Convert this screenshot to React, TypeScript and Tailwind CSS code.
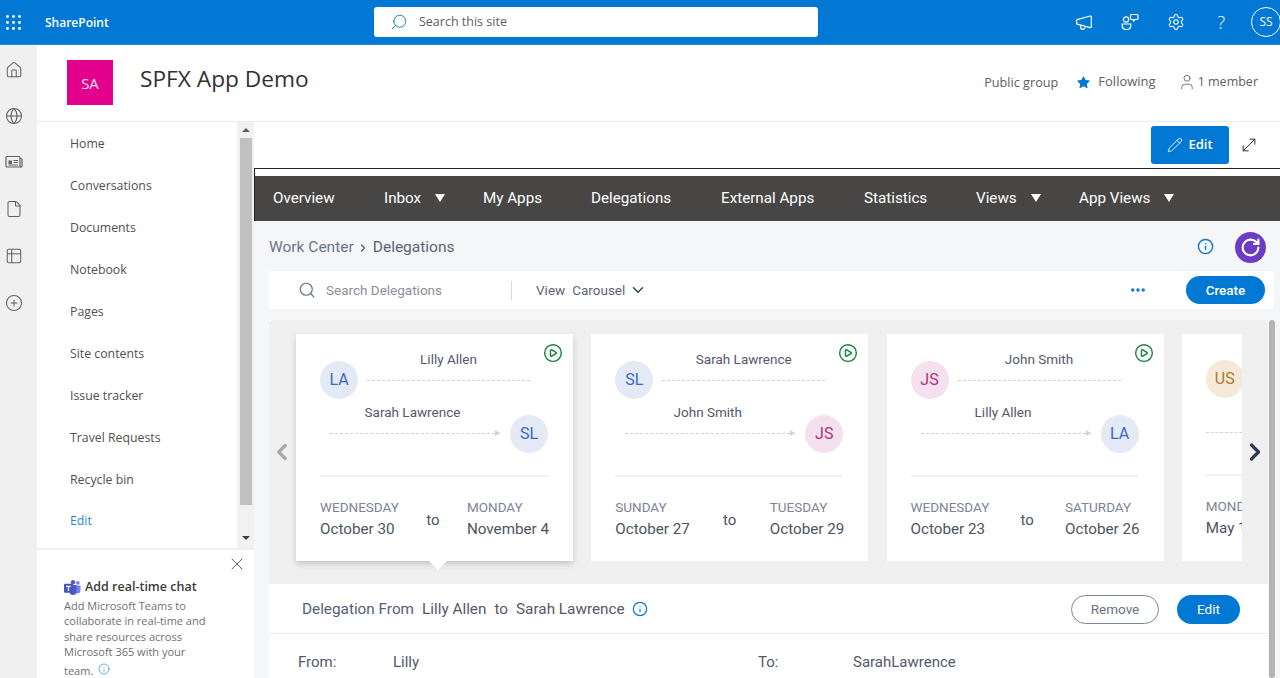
import { ChevronDown, ChevronLeft, ChevronRight, CirclePlay, CirclePlus, Ellipsis, File, Globe, House, Info, MoveDiagonal, Pencil, RotateCw, Search, Settings, Star, Table2, User, X } from 'lucide-react';

const SEGOE = "font-['Open_Sans',sans-serif]";

const NAV_LINKS = ['Home', 'Conversations', 'Documents', 'Notebook', 'Pages', 'Site contents', 'Issue tracker', 'Travel Requests', 'Recycle bin'];

const MENU = [
  { label: 'Overview', width: 'w-[111px]' },
  { label: 'Inbox', width: 'w-[99px]', caret: true },
  { label: 'My Apps', width: 'w-[108px]' },
  { label: 'Delegations', width: 'w-[130px]' },
  { label: 'External Apps', width: 'w-[143px]' },
  { label: 'Statistics', width: 'w-[112px]' },
  { label: 'Views', width: 'w-[103px]', caret: true },
  { label: 'App Views', width: 'w-[120px]', caret: true },
];

type Person = { name: string; initials: string; tone: string };

const LA: Person = { name: 'Lilly Allen', initials: 'LA', tone: 'bg-[#e3eaf6] text-[#3b66c4]' };
const SL: Person = { name: 'Sarah Lawrence', initials: 'SL', tone: 'bg-[#e3eaf6] text-[#3b66c4]' };
const JS: Person = { name: 'John Smith', initials: 'JS', tone: 'bg-[#f5e1ee] text-[#b0307e]' };

const CARDS = [
  { from: LA, to: SL, startDay: 'WEDNESDAY', start: 'October 30', endDay: 'MONDAY', end: 'November 4', selected: true },
  { from: SL, to: JS, startDay: 'SUNDAY', start: 'October 27', endDay: 'TUESDAY', end: 'October 29' },
  { from: JS, to: LA, startDay: 'WEDNESDAY', start: 'October 23', endDay: 'SATURDAY', end: 'October 26' },
];

function Waffle() {
  return (
    <svg width="15" height="15" viewBox="0 0 15 15" fill="white" aria-hidden>
      {[1.5, 7.5, 13.5].map((y) =>
        [1.5, 7.5, 13.5].map((x) => <circle key={`${x}-${y}`} cx={x} cy={y} r="1.4" />),
      )}
    </svg>
  );
}

function Horn() {
  return (
    <svg width="16" height="15" viewBox="0 0 16 15" fill="none" stroke="white" strokeWidth="1.2" aria-hidden>
      <path d="M1.2 4.6 14 1a1 1 0 0 1 1.3 1v9.6a1 1 0 0 1-1.3 1L1.2 9.2a.8.8 0 0 1-.6-.8V5.4a.8.8 0 0 1 .6-.8z" />
      <path d="M4.6 10.2v1.6a2.3 2.3 0 0 0 4.6.4" />
    </svg>
  );
}

function ChatBubbles() {
  return (
    <svg width="18" height="18" viewBox="0 0 18 18" fill="none" stroke="white" strokeWidth="1.2" aria-hidden>
      <path d="M10.5 1.5h5.5a1 1 0 0 1 1 1v3a1 1 0 0 1-1 1h-2l-1.5 1.5V6.5h-2a1 1 0 0 1-1-1v-3a1 1 0 0 1 1-1z" />
      <circle cx="5" cy="6.5" r="2.6" />
      <path d="M1.2 11h8.6v1.5c0 2.5-2 4-4.3 4s-4.3-1.5-4.3-4z" />
    </svg>
  );
}

function NewsIcon() {
  return (
    <svg width="18" height="18" viewBox="0 0 18 18" fill="none" stroke="currentColor" strokeWidth="1.2" className="mt-[28px]" aria-hidden>
      <path d="M1 4.5a1 1 0 0 1 1-1h12a1 1 0 0 1 1 1v9.5H2a1 1 0 0 1-1-1z" />
      <path d="M15 5.5h1a1 1 0 0 1 1 1V13a1 1 0 0 1-1 1h-1" />
      <rect x="3.5" y="7.5" width="3.5" height="3.5" fill="currentColor" stroke="none" />
      <path d="M8.5 7.5h4.5M8.5 9.5h4.5M3.5 12h9.5" strokeWidth="1" />
    </svg>
  );
}

function TeamsLogo() {
  return (
    <svg width="17" height="15" viewBox="0 0 17 15" aria-hidden>
      <circle cx="13.8" cy="2.8" r="1.9" fill="#7b83eb" />
      <path d="M10.5 5.5h6v5a3 3 0 0 1-6 0z" fill="#7b83eb" />
      <circle cx="9" cy="2.2" r="2.2" fill="#5059c9" />
      <path d="M5.5 5h7v6.5a3.5 3.5 0 0 1-7 0z" fill="#5059c9" />
      <rect x="0" y="3.8" width="9" height="9" rx="1" fill="#4b53bc" />
      <path d="M2 5.8h5v1.2H5.1v4H3.9V7H2z" fill="white" />
    </svg>
  );
}

function LeftRail() {
  return (
    <div className="flex w-[37px] shrink-0 flex-col items-start bg-[#f0f0f0] pl-[5px] pt-[16px] text-[#616161]">
      <House size={18} strokeWidth={1.4} />
      <Globe size={18} strokeWidth={1.4} className="mt-[28px]" />
      <NewsIcon />
      <File size={18} strokeWidth={1.4} className="mt-[29px]" />
      <Table2 size={18} strokeWidth={1.4} className="mt-[29px]" />
      <CirclePlus size={18} strokeWidth={1.4} className="mt-[29px]" />
    </div>
  );
}

function SideNav() {
  return (
    <aside className={`flex w-[217px] shrink-0 flex-col ${SEGOE}`}>
      <div className="flex h-[426px] shrink-0">
        <nav className="flex flex-1 flex-col pl-[33px] pt-[1px] text-[12.3px] text-[#505050]">
          {NAV_LINKS.map((link) => (
            <a key={link} className="flex h-[42px] shrink-0 items-center">
              {link}
            </a>
          ))}
          <a className="flex h-[41px] shrink-0 items-center text-[#2b88d8]">Edit</a>
        </nav>
        <div className="flex w-[17px] flex-col items-center bg-[#f1f1f1]">
          <div className="mt-[6px] h-0 w-0 border-x-[4px] border-b-[4px] border-x-transparent border-b-[#606060]" />
          <div className="mt-[6px] h-[367px] w-[12px] bg-[#c1c1c1]" />
          <div className="mt-[31px] h-0 w-0 border-x-[4px] border-t-[4px] border-x-transparent border-t-[#404040]" />
        </div>
      </div>
      <div className="relative flex-1 border-t-2 border-[#f0f0f0] pl-[27px] pr-[47px] pt-[28px]">
        <X size={20} strokeWidth={1.1} className="absolute right-[7px] top-[4px] text-[#505050]" />
        <div className="flex items-center gap-[4px] text-[12.5px] font-semibold text-[#3b3a39]">
          <TeamsLogo />
          <span className="whitespace-nowrap">Add real-time chat</span>
        </div>
        <p className="mt-[1px] text-[11px] leading-[15.4px] text-[#6f6f6f]">
          Add Microsoft Teams to collaborate in real-time and share resources across Microsoft 365 with your
        </p>
        <p className="mt-[4px] text-[11px] leading-[15.4px] text-[#6f6f6f]">
          team. <Info size={12} strokeWidth={1.4} className="ml-[2px] inline align-baseline text-[#2b88d8]" />
        </p>
      </div>
    </aside>
  );
}

function AvatarCircle({ person }: { person: Person }) {
  return (
    <div className={`flex h-[38px] w-[38px] shrink-0 items-center justify-center rounded-full text-[16px] ${person.tone}`}>
      {person.initials}
    </div>
  );
}

function DelegationCard({ card }: { card: (typeof CARDS)[number] }) {
  return (
    <div
      className={`relative h-[227px] w-[277px] shrink-0 bg-white pl-[24px] pr-[25px] pt-[16px] ${card.selected ? 'shadow-[0_3px_6px_rgba(0,0,0,0.18)]' : ''}`}
    >
      <CirclePlay size={20} strokeWidth={1.7} className="absolute right-[10px] top-[9px] text-[#15803d]" />
      <div className="flex items-end">
        <AvatarCircle person={card.from} />
        <div className="mb-[18px] ml-[9px] mr-[18px] flex flex-1 flex-col items-center">
          <span className="mb-[12px] text-[13.5px] leading-[18px] text-[#55586b]">{card.from.name}</span>
          <div className="w-full border-t border-dashed border-[#cfd3da]" />
        </div>
      </div>
      <div className="mt-[4px] flex items-end">
        <div className="mb-[19px] ml-[10px] mr-[10px] flex flex-1 flex-col items-center">
          <span className="mb-[12px] pr-[5px] text-[13.5px] leading-[18px] text-[#55586b]">{card.to.name}</span>
          <div className="relative w-full border-t border-dashed border-[#cfd3da]">
            <div className="absolute -top-[4px] right-0 h-0 w-0 border-y-[3.5px] border-l-[5px] border-y-transparent border-l-[#cfd3da]" />
          </div>
        </div>
        <AvatarCircle person={card.to} />
      </div>
      <div className="mt-[22px] border-t-2 border-[#f2f2f2]" />
      <div className="-mr-[1px] mt-[21px] flex items-center">
        <div className="flex flex-col">
          <span className="text-[13.5px] leading-[18px] text-[#7c8496]">{card.startDay}</span>
          <span className="mt-[3px] text-[15.2px] leading-[21px] text-[#4b5563]">{card.start}</span>
        </div>
        <span className="mt-[2px] flex-1 text-center text-[15px] text-[#4b5563]">to</span>
        <div className="flex flex-col">
          <span className="text-[13.5px] leading-[18px] text-[#7c8496]">{card.endDay}</span>
          <span className="mt-[3px] text-[15.2px] leading-[21px] text-[#4b5563]">{card.end}</span>
        </div>
      </div>
      {card.selected ? (
        <div className="absolute left-[133px] top-full h-0 w-0 border-x-[9px] border-t-[9px] border-x-transparent border-t-white" />
      ) : null}
    </div>
  );
}

function PeekCard() {
  return (
    <div className="h-[227px] w-[60px] shrink-0 overflow-hidden bg-white pl-[24px] pt-[26px]">
      <div className="flex h-[38px] w-[38px] shrink-0 items-center justify-center rounded-full bg-[#f5ead9] text-[16px] text-[#b8772a]">
        US
      </div>
      <div className="mt-[34px] w-[36px] border-t border-dashed border-[#cfd3da]" />
      <div className="mt-[41px] w-[36px] border-t-2 border-[#f2f2f2]" />
      <div className="mt-[21px] whitespace-nowrap text-[13.5px] leading-[18px] text-[#7c8496]">MONDAY</div>
      <div className="mt-[3px] whitespace-nowrap text-[15.2px] leading-[21px] text-[#4b5563]">May 19</div>
    </div>
  );
}

function WorkCenter() {
  return (
    <div className="flex-1 overflow-hidden bg-[#f5f6f8] font-['Roboto',sans-serif]">
      <div className="flex h-[45px] items-center border-l border-[#222] bg-[#484644] pl-[18px] text-[15.2px] text-white">
        {MENU.map((item) => (
          <div key={item.label} className={`flex shrink-0 items-center ${item.width}`}>
            <span>{item.label}</span>
            {item.caret ? (
              <span className="ml-[14px] h-0 w-0 border-x-[5px] border-t-[8px] border-x-transparent border-t-white" />
            ) : null}
          </div>
        ))}
      </div>

      <div className="flex h-[50px] items-center pl-[15px] pr-[14px]">
        <span className="mt-[3px] text-[15.5px] text-[#6b7588]">Work Center</span>
        <ChevronRight size={12} strokeWidth={2.4} className="ml-[3px] mr-[4px] mt-[3px] text-[#4b5563]" />
        <span className="mt-[3px] text-[15.5px] text-[#5b6477]">Delegations</span>
        <Info size={17} strokeWidth={2} className="ml-auto text-[#0b78d0]" />
        <div className="ml-[21px] mt-[3px] flex h-[31px] w-[31px] items-center justify-center rounded-full bg-[#6c3cc4]">
          <RotateCw size={21} strokeWidth={2.4} className="text-white" />
        </div>
      </div>

      <div className="ml-[15px] flex h-[38px] w-[1005px] items-center rounded-[3px] bg-white pl-[29px] pr-[9px]">
        <Search size={18} strokeWidth={1.6} className="text-[#64748b]" />
        <span className="ml-[10px] w-[185px] text-[13.5px] text-[#8a8f99]">Search Delegations</span>
        <div className="h-[19px] border-l border-[#d9d9d9]" />
        <span className="ml-[24px] text-[13.5px] text-[#5b6477]">View</span>
        <span className="ml-[7px] text-[13.5px] text-[#5b6477]">Carousel</span>
        <ChevronDown size={18} strokeWidth={2} className="ml-[4px] text-[#374151]" />
        <Ellipsis size={18} strokeWidth={2.6} className="ml-auto text-[#0b78d0]" />
        <button type="button" className="ml-[39px] h-[28px] w-[79px] rounded-full bg-[#0078d4] text-[13.5px] font-medium text-white">
          Create
        </button>
      </div>

      <div className="ml-[15px] mt-[11px] flex w-[1011px]">
        <div className="w-[999px] bg-white">
          <div className="relative flex h-[264px] gap-[18.25px] overflow-hidden rounded-t-[4px] bg-[#f0f0f0] pl-[27px] pt-[14px]">
            <ChevronLeft size={26} strokeWidth={3} className="absolute left-0 top-[119px] text-[#a8a8a8]" />
            {CARDS.map((card) => (
              <DelegationCard key={card.startDay + card.start} card={card} />
            ))}
            <PeekCard />
            <ChevronRight size={28} strokeWidth={2.8} className="absolute right-[-1px] top-[118px] text-[#2f3a4c]" />
          </div>
          <div className="flex h-[50px] items-center border-b border-[#ececec] pl-[33px] pr-[28px] pt-[1px]">
            <span className="text-[15.3px] text-[#55607a]">Delegation From</span>
            <span className="ml-[8px] text-[15.3px] text-[#55586b]">Lilly Allen</span>
            <span className="ml-[8px] text-[15.3px] text-[#55586b]">to</span>
            <span className="ml-[8px] text-[15.3px] text-[#55586b]">Sarah Lawrence</span>
            <Info size={16} strokeWidth={1.8} className="ml-[7px] text-[#0b78d0]" />
            <button type="button" className="ml-auto h-[29px] w-[88px] rounded-full border border-[#7c8496] text-[13.5px] text-[#6b7280]">
              Remove
            </button>
            <button type="button" className="ml-[18px] h-[29px] w-[63px] rounded-full bg-[#0078d4] text-[13.5px] text-white">
              Edit
            </button>
          </div>
          <div className="flex h-[60px] items-start pl-[29px] pt-[17px] text-[15px] text-[#55586b]">
            <span className="w-[95px]">From:</span>
            <span className="w-[365px]">Lilly</span>
            <span className="w-[95px]">To:</span>
            <span>SarahLawrence</span>
          </div>
        </div>
        <div className="ml-[1px] w-[6px]">
          <div className="h-[358px] w-[6px] rounded-full bg-[#b4b4b4]" />
        </div>
      </div>
    </div>
  );
}

export default function App() {
  return (
    <div className="flex h-screen flex-col overflow-hidden bg-white">
      <header className={`flex h-[45px] shrink-0 items-center border-b border-[#2b88d8] bg-[#0078d4] text-white ${SEGOE}`}>
        <div className="ml-[6px]">
          <Waffle />
        </div>
        <span className="ml-[24px] mt-[1px] w-[61px] whitespace-nowrap text-[12px] font-semibold">SharePoint</span>
        <div className="ml-[268px] flex h-[30px] w-[444px] items-center rounded-[3px] bg-white pl-[16px]">
          <Search size={18} strokeWidth={1.2} className="-scale-x-100 text-[#0078d4]" />
          <span className="ml-[11px] mt-[1px] text-[12.5px] text-[#605e5c]">Search this site</span>
        </div>
        <div className="ml-auto flex items-center">
          <Horn />
          <div className="ml-[29px]">
            <ChatBubbles />
          </div>
          <Settings size={18} strokeWidth={1.4} className="ml-[28px]" />
          <span className="ml-[32px] text-[18px] font-light leading-none">?</span>
          <div className="ml-[26px] mr-[-1px] flex h-[30px] w-[30px] items-center justify-center rounded-full border border-white text-[12px]">
            SS
          </div>
        </div>
      </header>

      <div className="flex min-h-0 flex-1">
        <LeftRail />
        <div className="flex min-w-0 flex-1 flex-col">
          <div className={`flex h-[77px] shrink-0 items-center border-b border-[#ececec] pl-[30px] pr-[22px] ${SEGOE}`}>
            <div className="mb-[2px] flex h-[45px] w-[46px] items-center justify-center bg-[#e3008c] pt-[2px] text-[15px] text-[#fbe3f2]">
              SA
            </div>
            <h1 className="mb-[7px] ml-[27px] text-[22.7px] font-normal text-[#323130]">SPFX App Demo</h1>
            <div className="ml-auto flex items-center text-[#605e5c]">
              <span className="text-[12.7px]">Public group</span>
              <Star size={15} fill="#0078d4" strokeWidth={0} className="mb-[2px] ml-[18px] text-[#0078d4]" />
              <span className="mb-[2px] ml-[7px] text-[13px]">Following</span>
              <User size={18} strokeWidth={1.1} className="mb-[2px] ml-[22px]" />
              <span className="mb-[2px] ml-[2px] text-[12.5px]">1 member</span>
            </div>
          </div>
          <div className="flex min-h-0 flex-1">
            <SideNav />
            <div className="flex min-w-0 flex-1 flex-col">
              <div className={`flex h-[46px] shrink-0 items-center ${SEGOE}`}>
                <button type="button" className="ml-auto flex h-[38px] w-[78px] items-center justify-center gap-[5px] rounded-[3px] bg-[#0078d4] text-[13px] font-semibold text-white">
                  <Pencil size={16} strokeWidth={1.3} />
                  Edit
                </button>
                <MoveDiagonal size={20} strokeWidth={1.2} className="ml-[10px] mr-[21px] text-[#323130]" />
              </div>
              <div className="h-[8px] shrink-0 border-l border-t border-[#222] bg-white" />
              <WorkCenter />
            </div>
          </div>
        </div>
      </div>
    </div>
  );
}
